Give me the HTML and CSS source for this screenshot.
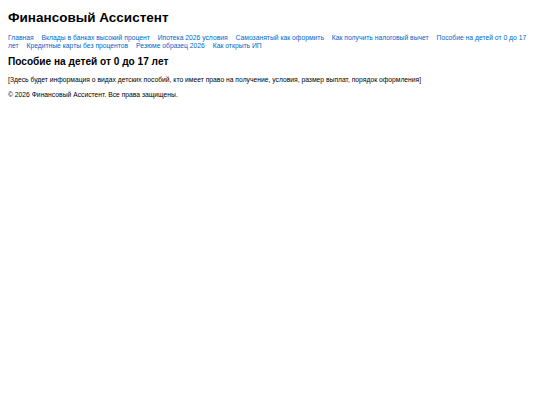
FILE: index.html
```
<!DOCTYPE html>
<html lang="ru">
<head>
<meta charset="utf-8">
<title>Финансовый Ассистент</title>
<link rel="stylesheet" href="styles.css">
</head>
<body>
<header class="site-header">
<h1 class="site-title">Финансовый Ассистент</h1>
<nav class="site-nav">
<a href="#">Главная</a>
<a href="#">Вклады в банках высокий процент</a>
<a href="#">Ипотека 2026 условия</a>
<a href="#">Самозанятый как оформить</a>
<a href="#">Как получить налоговый вычет</a>
<a href="#">Пособие на детей от 0 до 17 лет</a>
<a href="#">Кредитные карты без процентов</a>
<a href="#">Резюме образец 2026</a>
<a href="#">Как открыть ИП</a>
</nav>
</header>
<main class="content">
<h2 class="page-title">Пособие на детей от 0 до 17 лет</h2>
<p class="text">[Здесь будет информация о видах детских пособий, кто имеет право на получение, условия, размер выплат, порядок оформления]</p>
</main>
<footer class="site-footer">
<p class="text">© 2026 Финансовый Ассистент. Все права защищены.</p>
</footer>
</body>
</html>
```
FILE: styles.css
```
html, body {
  margin: 0;
  padding: 0;
  background: #fff;
}
body {
  padding: 8px;
  font-family: "Liberation Sans", Arial, sans-serif;
  font-size: 6.75px;
  color: #000;
}
.site-title {
  font-size: 13.5px;
  font-weight: bold;
  margin: 2px 0 9px;
  line-height: normal;
}
.site-nav {
  font-size: 6.75px;
  line-height: 8px;
}
.site-nav a {
  color: #0066cc;
  text-decoration: none;
  margin-right: 6px;
}
.page-title {
  font-size: 10.125px;
  font-weight: bold;
  margin: 6px 0 9px;
  line-height: normal;
}
.text {
  font-size: 6.75px;
  line-height: normal;
  margin: 0 0 8px;
}
```
